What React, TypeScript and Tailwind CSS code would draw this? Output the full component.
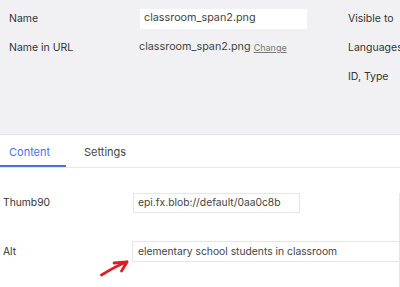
import React from 'react';

const FONT = { fontFamily: 'Inter, "Noto Sans", sans-serif' };

const App: React.FC = () => {
  return (
    <div className="relative w-[400px] h-[287px] overflow-hidden bg-white text-[10.5px] text-[#333]" style={FONT}>
      {/* Header panel */}
      <div className="flex h-[135px] bg-[#f1f1f4] border-b border-[#e3e3e7] pt-[4px]">
        <div className="w-[140px] shrink-0 pl-[9px]">
          <div className="h-[29px] flex items-center">Name</div>
          <div className="h-[29px] flex items-center">Name in URL</div>
        </div>
        <div className="w-[208px] shrink-0">
          <div className="h-[29px] flex items-center">
            <div className="w-[167px] h-[20px] bg-white flex items-center pl-[4px] text-[#444] text-[10.8px]">
              classroom_span2.png
            </div>
          </div>
          <div className="h-[29px] flex items-center text-[#444] -ml-[1px] text-[10.8px]">
            classroom_span2.png
            <span className="ml-[3px] text-[9px] text-[#777] underline">Change</span>
          </div>
        </div>
        <div className="flex-1 whitespace-nowrap">
          <div className="h-[29px] flex items-center">Visible to</div>
          <div className="h-[29px] flex items-center">Languages</div>
          <div className="h-[29px] flex items-center">ID, Type</div>
        </div>
      </div>

      {/* Tabs */}
      <div className="flex h-[33px] border-b border-[#e8e8ea] text-[11px] pt-[5px]">
        <div className="w-[66px] pl-[9px] flex items-center text-[#4a72e8] border-b-2 border-[#4a72e8]">Content</div>
        <div className="pl-[18px] flex items-center text-[#444] pb-[2px]">Settings</div>
      </div>

      {/* Form */}
      <div className="h-[119px] border-r border-b border-[#e6e6e8] text-[10.3px]">
        <div className="flex items-center h-[20px] mt-[25px]">
          <div className="w-[133px] shrink-0 pl-[3px]">Thumb90</div>
          <div className="w-[167px] h-[20px] border border-[#e6e6e8] flex items-center pl-[4px] text-[#444]">
            epi.fx.blob://default/0aa0c8b
          </div>
        </div>
        <div className="flex items-center h-[21px] mt-[28px]">
          <div className="w-[132px] shrink-0 pl-[3px]">Alt</div>
          <div className="flex-1 h-[21px] border-t border-b border-l border-[#e6e6e8] flex items-center pl-[5px] text-[#444]">
            elementary school students in classroom
          </div>
        </div>
      </div>

      {/* Annotation arrow */}
      <svg className="absolute left-[96px] top-[254px]" width="40" height="27" viewBox="0 0 40 27" fill="none">
        <path d="M5.5 21 C 12 17, 22 11, 31 8" stroke="#e11b22" strokeWidth="2.8" strokeLinecap="round" />
        <path d="M18 9 L 31 8 L 25.5 17" stroke="#e11b22" strokeWidth="2.8" strokeLinecap="round" strokeLinejoin="round" />
      </svg>
    </div>
  );
};

export default App;
